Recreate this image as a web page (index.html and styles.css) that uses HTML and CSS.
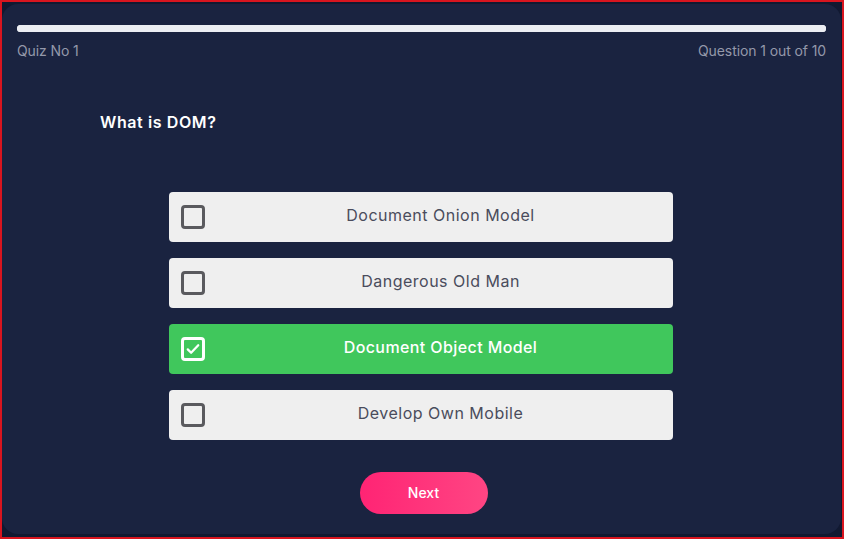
FILE: index.html
```html
<!DOCTYPE html>
<html>
<head>
<meta charset="utf-8">
<link rel="stylesheet" href="styles.css">
</head>
<body>
<div class="frame">
  <div class="card">
    <div class="progress"><div class="progress-fill"></div></div>
    <div class="meta">
      <span>Quiz No 1</span>
      <span>Question 1 out of 10</span>
    </div>
    <h2 class="question">What is DOM?</h2>
    <div class="options">
      <div class="option">
        <span class="box"></span>
        <span class="label">Document Onion Model</span>
      </div>
      <div class="option">
        <span class="box"></span>
        <span class="label">Dangerous Old Man</span>
      </div>
      <div class="option selected">
        <span class="box">
          <svg viewBox="0 0 24 24" width="18" height="18"><path d="M5 12.5l4.5 4.5L19 7" fill="none" stroke="#fff" stroke-width="3" stroke-linecap="round" stroke-linejoin="round"/></svg>
        </span>
        <span class="label">Document Object Model</span>
      </div>
      <div class="option">
        <span class="box"></span>
        <span class="label">Develop Own Mobile</span>
      </div>
    </div>
    <div class="actions">
      <button class="next">Next</button>
    </div>
  </div>
</div>
</body>
</html>
```
FILE: styles.css
```css
* { box-sizing: border-box; }
html, body { margin: 0; padding: 0; }
body {
  width: 844px;
  height: 539px;
  font-family: "Inter", "Open Sans", sans-serif;
  background: #121a33;
  overflow: hidden;
}
.frame {
  width: 844px;
  height: 539px;
  border: 2px solid #d8151f;
  padding: 2px 1px 3px 0;
  background: #111931;
}
.card {
  height: 100%;
  background: #1a2340;
  border-radius: 16px;
  padding: 21px 15px 0 15px;
  display: flex;
  flex-direction: column;
}
.progress {
  height: 7px;
  border-radius: 4px;
  background: #eceef3;
}
.progress-fill { width: 100%; height: 100%; border-radius: 4px; background: #eceef3; }
.meta {
  margin-top: 8px;
  display: flex;
  justify-content: space-between;
  color: #9498aa;
  font-size: 14px;
  line-height: 21px;
  letter-spacing: -0.1px;
}
.question {
  margin: 49px 0 0 83px;
  color: #ffffff;
  font-size: 16px;
  font-weight: 600;
  line-height: 24px;
  letter-spacing: 0.6px;
}
.options {
  margin: 58px auto 0;
  width: 504px;
  display: flex;
  flex-direction: column;
  gap: 16px;
  position: relative;
  left: -1px;
}
.option {
  height: 50px;
  background: #efefef;
  border-radius: 4px;
  display: flex;
  align-items: center;
  padding-left: 12px;
}
.box {
  width: 24px;
  height: 24px;
  border: 3px solid #5a5a5e;
  border-radius: 4px;
  display: flex;
  align-items: center;
  justify-content: center;
  flex: none;
}
.label {
  flex: 1;
  margin-left: 4px;
  margin-bottom: 4px;
  text-align: center;
  color: #4a4c5c;
  font-size: 16px;
  letter-spacing: 0.5px;
}
.selected { background: #40c75c; }
.selected .box { border-color: #ffffff; }
.selected .label { color: #ffffff; font-weight: 500; letter-spacing: 0.4px; }
.actions {
  margin-top: 32px;
  display: flex;
  justify-content: center;
  padding-left: 4px;
}
.next {
  width: 128px;
  height: 42px;
  border: none;
  border-radius: 21px;
  background: linear-gradient(90deg, #ff2474, #ff4583);
  color: #ffffff;
  font-family: inherit;
  font-size: 14px;
  font-weight: 500;
  padding-bottom: 3px;
}
```
